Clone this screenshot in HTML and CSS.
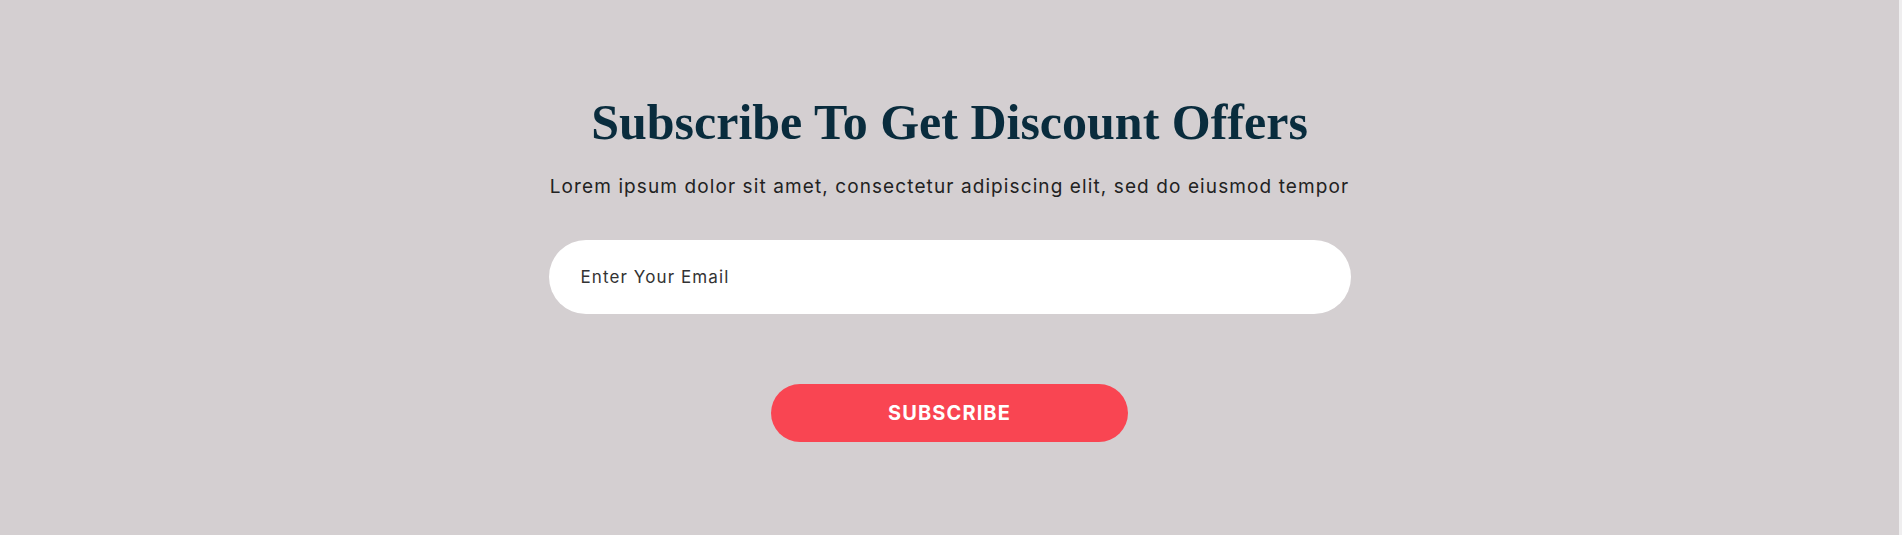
FILE: index.html
```html
<!DOCTYPE html>
<html lang="en">
<head>
<meta charset="utf-8">
<title>Subscribe</title>
<link rel="stylesheet" href="styles.css">
</head>
<body>
<section class="subscribe">
  <div class="subscribe-inner">
    <h2 class="subscribe-title">Subscribe To Get Discount Offers</h2>
    <p class="subscribe-text">Lorem ipsum dolor sit amet, consectetur adipiscing elit, sed do eiusmod tempor</p>
    <form class="subscribe-form">
      <input class="subscribe-input" type="email" placeholder="Enter Your Email">
      <button class="subscribe-btn" type="button">SUBSCRIBE</button>
    </form>
  </div>
</section>
</body>
</html>
```
FILE: styles.css
```css
html, body {
  margin: 0;
  padding: 0;
  height: 100%;
  background: #d4cfd1;
}
.subscribe {
  box-sizing: border-box;
  min-height: 100vh;
  display: flex;
  justify-content: center;
  align-items: flex-start;
  padding-top: 92px;
  border-right: 3px solid #efeeef;
}
.subscribe-inner {
  width: 802px;
  display: flex;
  flex-direction: column;
  align-items: center;
}
.subscribe-title {
  margin: 0;
  font-family: "Liberation Serif", "Times New Roman", serif;
  font-weight: 700;
  font-size: 50px;
  line-height: 60px;
  color: #092c3d;
  text-align: center;
}
.subscribe-text {
  margin: 22px 0 0;
  font-family: Inter, "Open Sans", sans-serif;
  font-size: 19px;
  line-height: 26px;
  letter-spacing: 1.1px;
  color: #222;
  text-align: center;
  white-space: nowrap;
}
.subscribe-form {
  width: 100%;
  margin-top: 40px;
  display: flex;
  flex-direction: column;
  align-items: center;
}
.subscribe-input {
  box-sizing: border-box;
  width: 100%;
  height: 74px;
  border: none;
  border-radius: 37px;
  background: #fff;
  padding: 0 32px;
  font-family: Inter, "Open Sans", sans-serif;
  font-size: 17px;
  letter-spacing: 1.1px;
  color: #333;
  outline: none;
}
.subscribe-input::placeholder {
  color: #333;
}
.subscribe-btn {
  margin-top: 70px;
  width: 357px;
  height: 58px;
  border: none;
  border-radius: 29px;
  background: #f94552;
  color: #fff;
  font-family: Inter, "Open Sans", sans-serif;
  font-weight: 700;
  font-size: 20px;
  letter-spacing: 1.1px;
  cursor: pointer;
}
```
